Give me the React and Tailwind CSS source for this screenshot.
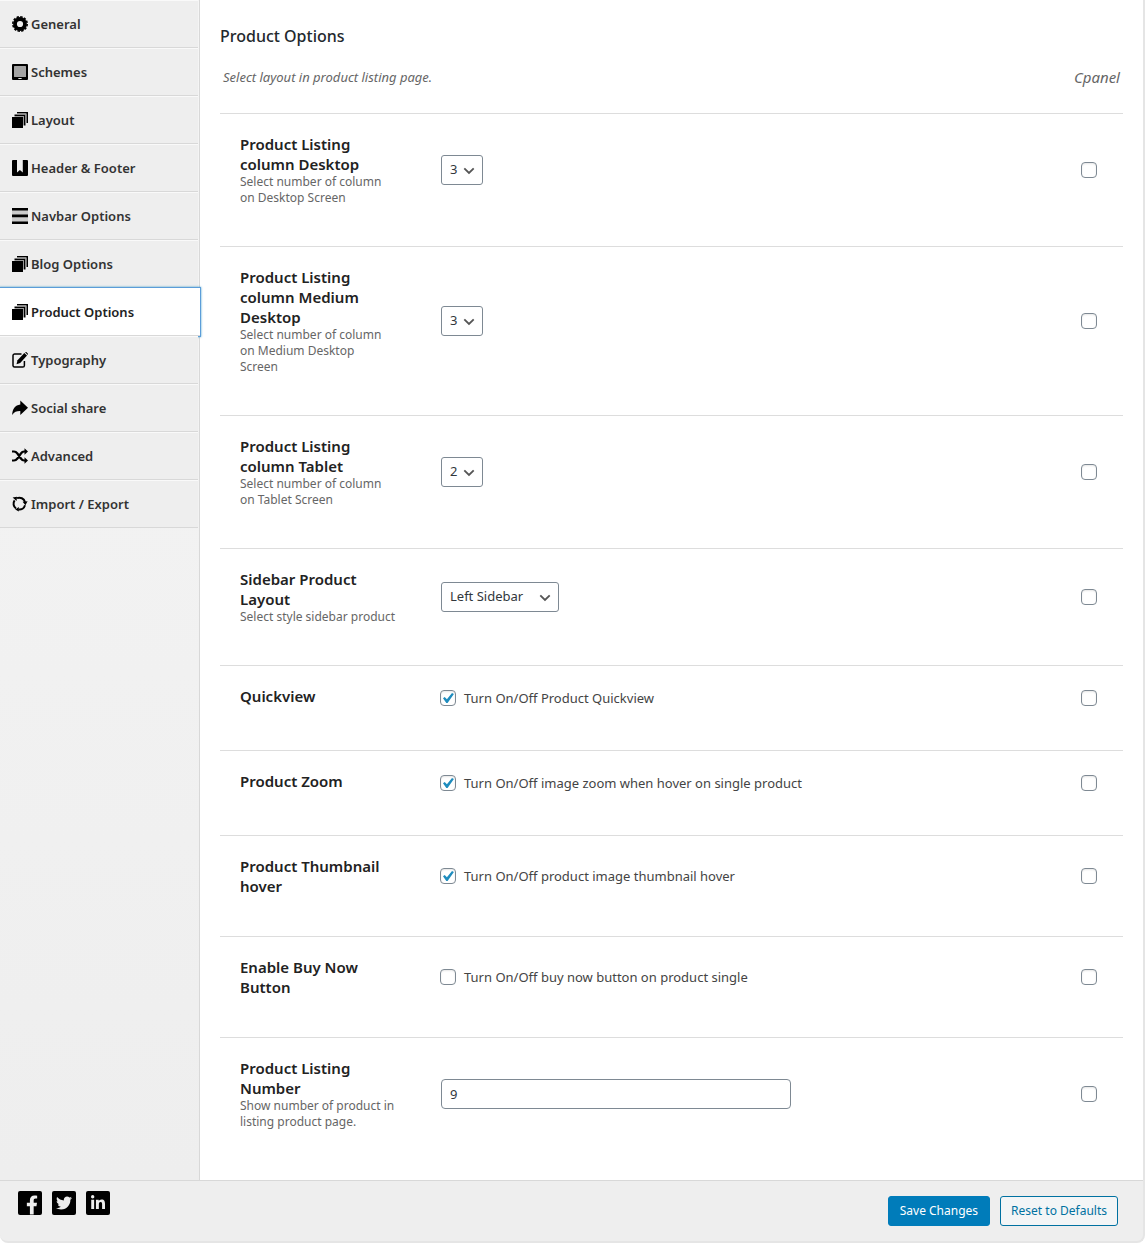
import { FaFacebookF, FaLinkedinIn, FaTwitter } from "react-icons/fa"

const svgProps = { viewBox: "0 0 16 16", className: "size-4 shrink-0", "aria-hidden": true }

function GearIcon() {
    return (
        <svg {...svgProps}>
            <circle cx="8" cy="8" r="5" fill="none" stroke="#000" strokeWidth="3.8" />
            <circle cx="8" cy="8" r="7.2" fill="none" stroke="#000" strokeWidth="1.6" strokeDasharray="2.4 1.37" />
        </svg>
    )
}

function SchemesIcon() {
    return (
        <svg {...svgProps}>
            <rect width="16" height="16" rx="1" />
            <rect x="2" y="2" width="12" height="11" rx="0.5" fill="#a3a3a3" />
            <path d="M6 14.5h4" stroke="#999" />
            <path d="M7.2 14.5h1.6" stroke="#fff" />
        </svg>
    )
}

function StackIcon() {
    return (
        <svg {...svgProps}>
            <path d="M5 0h11v11h-1.6V1.6H5z" />
            <path d="M2.5 2.5h11v11H12V4H2.5z" />
            <path d="M5 1.6h9.4V11h-.9V2.5H5zM2.5 4H12v9.5h-1V5H2.5z" fill="#999" />
            <path d="M0 5h11v11H0z" />
        </svg>
    )
}

function BookmarkIcon() {
    return (
        <svg {...svgProps}>
            <path d="M1 0h4v12.5L7.9 10l2.9 2.5V0H15a1 1 0 0 1 1 1v14a1 1 0 0 1-1 1H1a1 1 0 0 1-1-1V1a1 1 0 0 1 1-1z" />
        </svg>
    )
}

function LinesIcon() {
    return (
        <svg {...svgProps}>
            <path d="M0 0h16v16H0z" fill="#ccc" />
            <path d="M0 0h16v2.6H0zM0 6.6h16v2.6H0zM0 13.4h16V16H0z" />
        </svg>
    )
}

function EditIcon() {
    return (
        <svg {...svgProps}>
            <path d="M9.5 2H2.5A1.6 1.6 0 0 0 1 3.6v10A1.6 1.6 0 0 0 2.5 15h8.3a1.6 1.6 0 0 0 1.6-1.6V9" fill="none" stroke="#000" strokeWidth="1.5" />
            <path d="M4.5 12.3l1-4L12.3.9l2.7 2.6-6.8 7.4z" />
            <path d="M13 .2l1.3-.2L16 1.8l-.2 1.1z" />
        </svg>
    )
}

function ShareIcon() {
    return (
        <svg {...svgProps}>
            <path d="M8.3.4L16 7.8l-7.7 7.2v-4C4.8 10.9 2.3 11.8.2 15 .2 9 3.2 5 8.3 4.4z" />
        </svg>
    )
}

function ShuffleIcon() {
    return (
        <svg {...svgProps}>
            <path d="M0 3.5h2c1.7 0 2.5.8 3.4 2l3.5 5c.9 1.3 1.8 2 3.2 2h1.5M0 12.5h2c1.7 0 2.5-.8 3.4-2l3.5-5c.9-1.3 1.8-2 3.2-2h1.5" fill="none" stroke="#000" strokeWidth="2.2" />
            <path d="M12.5.2L16 3.5l-3.5 3.3zM12.5 9.2l3.5 3.3-3.5 3.3z" />
        </svg>
    )
}

function RefreshIcon() {
    return (
        <svg {...svgProps}>
            <g fill="none" stroke="#000" strokeWidth="2">
                <path d="M5 2.2A5.8 5.8 0 0 1 13 6" />
                <path d="M13 9.2A5.8 5.8 0 0 1 6.5 13.4" />
                <path d="M4 12.5A5.8 5.8 0 0 1 2.6 4.4" />
            </g>
            <path d="M.6 1.4L5 .8 4.6 5zM10.6 5.8l5-.6-2.2 4zM6.8 11v4.6L3.2 13.6z" />
        </svg>
    )
}

const navItems = [
    { label: "General", Icon: GearIcon },
    { label: "Schemes", Icon: SchemesIcon },
    { label: "Layout", Icon: StackIcon },
    { label: "Header & Footer", Icon: BookmarkIcon },
    { label: "Navbar Options", Icon: LinesIcon },
    { label: "Blog Options", Icon: StackIcon },
    { label: "Product Options", Icon: StackIcon, active: true },
    { label: "Typography", Icon: EditIcon },
    { label: "Social share", Icon: ShareIcon },
    { label: "Advanced", Icon: ShuffleIcon },
    { label: "Import / Export", Icon: RefreshIcon },
]

const fields = [
    { id: "col-desktop", type: "select", title: "Product Listing column Desktop", desc: "Select number of column on Desktop Screen", value: "3" },
    { id: "col-medium", type: "select", title: "Product Listing column Medium Desktop", desc: "Select number of column on Medium Desktop\nScreen", value: "3" },
    { id: "col-tablet", type: "select", title: "Product Listing column Tablet", desc: "Select number of column on Tablet Screen", value: "2" },
    { id: "sidebar", type: "select", wide: true, title: "Sidebar Product Layout", desc: "Select style sidebar product", value: "Left Sidebar" },
    { id: "quickview", type: "checkbox", title: "Quickview", label: "Turn On/Off Product Quickview", checked: true },
    { id: "zoom", type: "checkbox", title: "Product Zoom", label: "Turn On/Off image zoom when hover on single product", checked: true },
    { id: "thumb-hover", type: "checkbox", title: "Product Thumbnail hover", label: "Turn On/Off product image thumbnail hover", checked: true },
    { id: "buy-now", type: "checkbox", title: "Enable Buy Now Button", label: "Turn On/Off buy now button on product single" },
    { id: "listing-number", type: "text", title: "Product Listing Number", desc: "Show number of product in listing product page.", value: "9" },
]

function Checkbox({ id, checked, ...props }) {
    return (
        <span className="relative flex size-4 shrink-0">
            <input
                id={id}
                type="checkbox"
                defaultChecked={checked}
                className="peer size-4 appearance-none rounded border border-[#7e8993] bg-white shadow-[inset_0_1px_2px_rgba(0,0,0,0.1)]"
                {...props}
            />
            <svg viewBox="0 0 16 16" className="pointer-events-none absolute inset-0 hidden size-4 peer-checked:block" aria-hidden="true">
                <path d="M3 8.3l1.7-1.4 2.2 2.3L12 3l1.9 1-6.3 9H6.3z" fill="#1e8cbe" />
            </svg>
        </span>
    )
}

function Select({ id, value, wide }) {
    const options = wide ? ["Left Sidebar", "Right Sidebar", "Full Width"] : ["1", "2", "3", "4", "5", "6"]
    return (
        <div className={wide ? "relative m-px w-[118px]" : "relative m-px w-[42px]"}>
            <select
                id={id}
                defaultValue={value}
                className="h-[30px] w-full appearance-none rounded-[3px] border border-[#7e8993] bg-white pl-2 text-[13px] text-[#32373c]"
            >
                {options.map(option => (
                    <option key={option}>{option}</option>
                ))}
            </select>
            <svg viewBox="0 0 12 8" className="pointer-events-none absolute top-3 right-2 h-2 w-3" aria-hidden="true">
                <path d="M1.3 1.3L6 6l4.7-4.7" fill="none" stroke="#555" strokeWidth="1.8" />
            </svg>
        </div>
    )
}

function Control({ field }) {
    if (field.type === "select") return <Select {...field} />
    if (field.type === "text") {
        return (
            <input
                id={field.id}
                type="text"
                defaultValue={field.value}
                className="m-px h-[30px] w-[350px] max-w-full rounded border border-[#7e8993] bg-white px-2 text-[13px] text-[#32373c]"
            />
        )
    }
    return (
        <label htmlFor={field.id} className="flex min-h-6 items-center gap-2 text-[13px] leading-5 text-[#444]">
            <Checkbox id={field.id} checked={field.checked} />
            {field.label}
        </label>
    )
}

function FieldRow({ field }) {
    const Title = field.type === "checkbox" ? "h3" : "label"
    return (
        <div className="flex items-center border-t border-[#ddd] pt-5 pr-[26px] pb-10 pl-5">
            <div className="mr-[42px] w-[158px] shrink-0 self-start">
                <Title htmlFor={field.type === "checkbox" ? undefined : field.id} className="block text-[15px] leading-5 font-semibold text-[#222]">
                    {field.title}
                </Title>
                {field.desc && <p className="text-xs leading-4 whitespace-pre-line text-[#666]">{field.desc}</p>}
            </div>
            <div className="min-w-0 flex-1">
                <Control field={field} />
            </div>
            <Checkbox aria-label={`Cpanel: ${field.title}`} />
        </div>
    )
}

export default function App() {
    return (
        <div className="rounded-b-lg border-r-2 border-b-2 border-[#e5e5e5] bg-[#eee] font-['Noto_Sans',sans-serif]">
            <div className="flex">
                {/* sits above the main panel so the focus ring is not clipped */}
                <aside className="relative z-10 w-[200px] shrink-0 border-r border-[#d8d8d8] bg-linear-to-b from-[#f5f5f5] to-[#eee]">
                    <nav>
                        {navItems.map(({ label, Icon, active }) => (
                            <a
                                key={label}
                                href="#"
                                className={
                                    active
                                        ? "-mr-px flex h-12 items-center gap-[3px] border-t border-b border-t-white border-b-[#d8d8d8] bg-white pl-3 text-[13px] font-semibold text-[#222] shadow-[0_0_0_1px_#5b9dd9,0_0_2px_1px_rgba(30,140,190,0.8)]"
                                        : "mr-px flex h-12 items-center gap-[3px] border-t border-b border-t-[#f9f9f9] border-b-[#d8d8d8] bg-[#eee] pl-3 text-[13px] font-semibold text-[#333]"
                                }
                            >
                                <Icon />
                                <span className="pt-0.5">{label}</span>
                            </a>
                        ))}
                    </nav>
                </aside>

                <main className="min-w-0 flex-1 bg-white px-5 pb-2.5">
                    <h2 className="pt-6 text-base leading-6 font-medium text-[#23282d]">Product Options</h2>
                    <div className="flex items-center justify-between px-[3px] pt-[17px] pb-6 text-[#666] italic">
                        <p className="text-[13px] leading-6">Select layout in product listing page.</p>
                        <span className="text-[15px] leading-6">Cpanel</span>
                    </div>
                    {fields.map(field => (
                        <FieldRow key={field.id} field={field} />
                    ))}
                </main>
            </div>

            <footer className="flex items-start justify-between border-t border-[#d8d8d8] pr-[25px] pl-[18px]">
                <div className="flex gap-2.5 pt-2.5 text-[#eee]">
                    <a href="#" aria-label="Facebook" className="flex size-6 items-end justify-end overflow-hidden rounded-xs bg-black pr-1">
                        <FaFacebookF className="h-5 w-3" />
                    </a>
                    <a href="#" aria-label="Twitter" className="flex size-6 items-center justify-center rounded-xs bg-black">
                        <FaTwitter className="size-4" />
                    </a>
                    <a href="#" aria-label="LinkedIn" className="flex size-6 items-center justify-center rounded-xs bg-black">
                        <FaLinkedinIn className="size-4" />
                    </a>
                </div>
                <div className="flex gap-2.5 py-[15px]">
                    <button type="button" className="h-[30px] rounded-[3px] border border-[#007cba] bg-[#007cba] px-[11px] text-xs text-white">
                        Save Changes
                    </button>
                    <button type="button" className="h-[30px] rounded-[3px] border border-[#0071a1] bg-[#f3f5f6] px-2.5 text-xs text-[#0071a1]">
                        Reset to Defaults
                    </button>
                </div>
            </footer>
        </div>
    )
}
